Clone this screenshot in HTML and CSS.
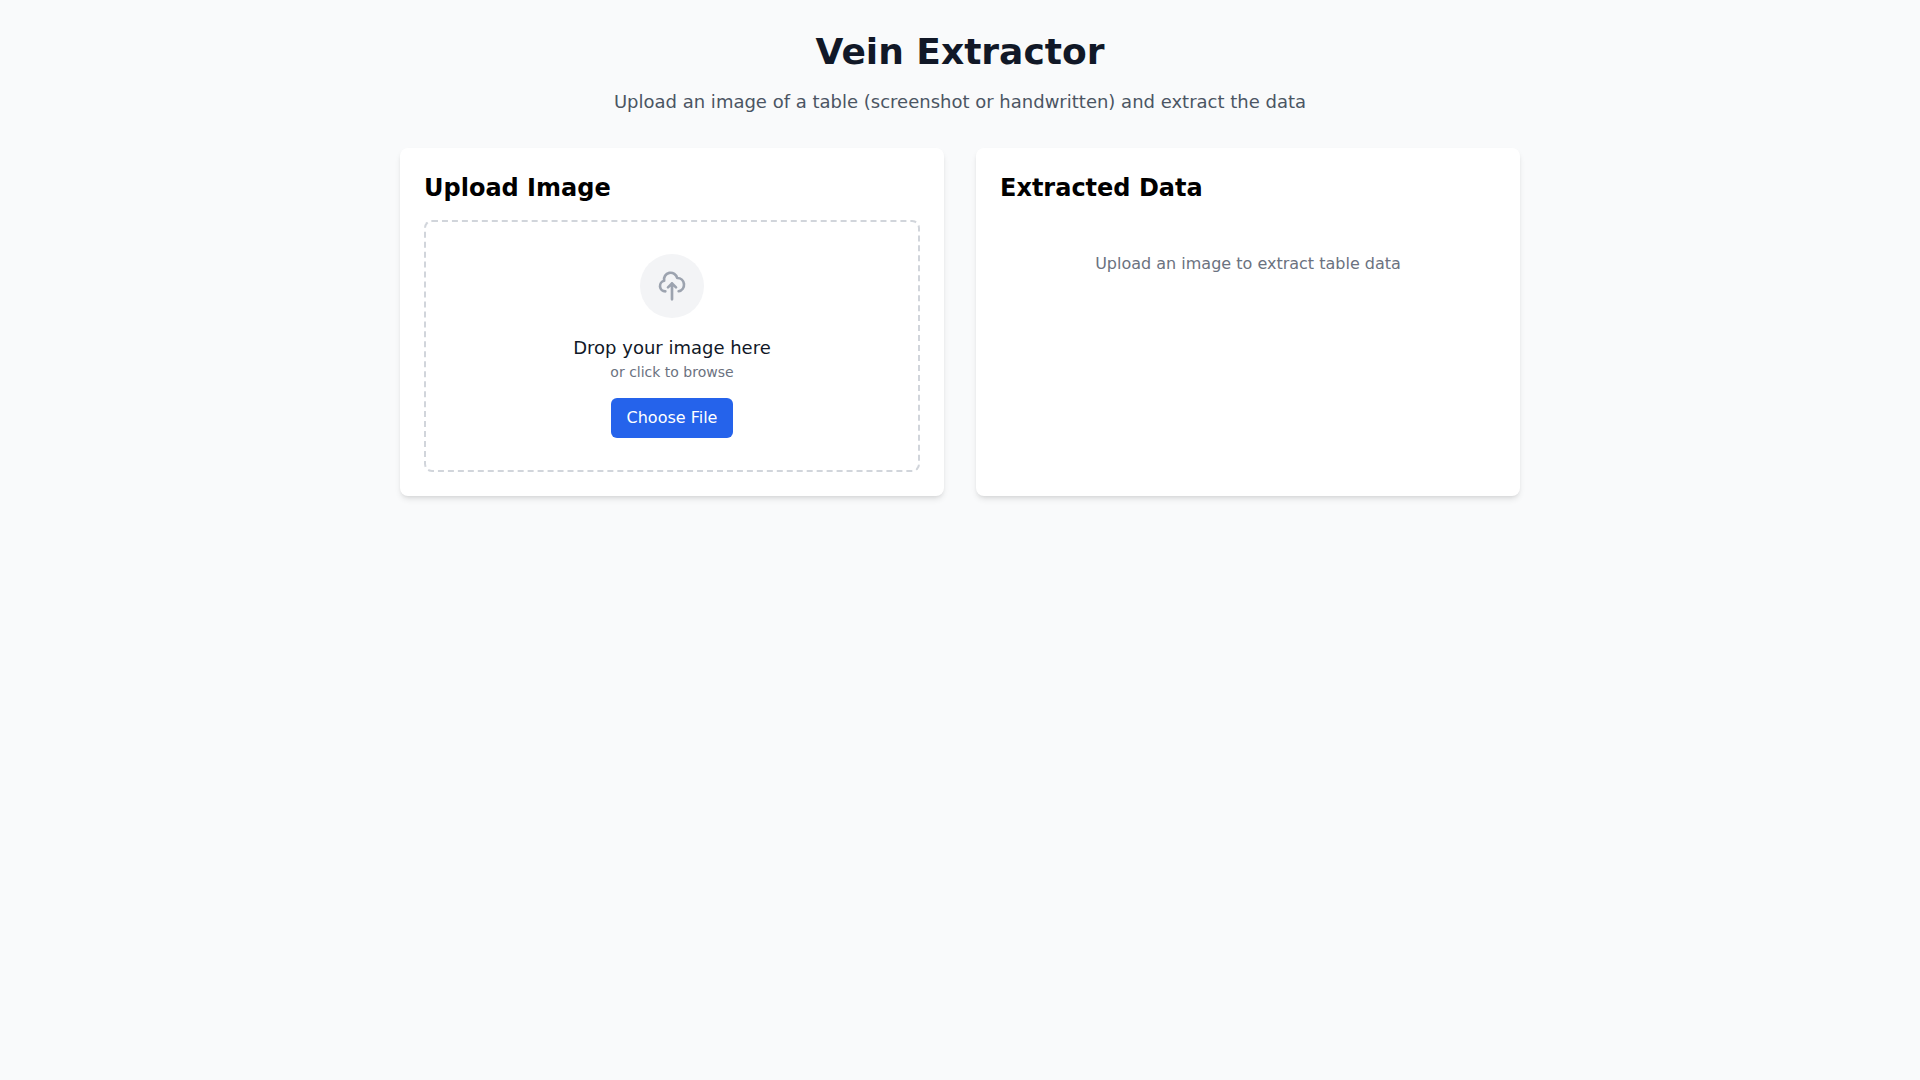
FILE: index.html
```html
<!DOCTYPE html>
<html lang="en">
<head>
  <meta charset="UTF-8" />
  <meta name="viewport" content="width=device-width, initial-scale=1" />
  <title>Vein Extractor</title>
  <link rel="stylesheet" href="styles.css">
</head>
<body>
  <div class="container">
    <header class="header">
      <h1>Vein Extractor</h1>
      <p>Upload an image of a table (screenshot or handwritten) and extract the data</p>
    </header>

    <main class="panels">
      <section class="card">
        <h2>Upload Image</h2>
        <div class="drop-zone" id="dropZone">
          <div class="upload-icon">
            <svg fill="none" stroke="currentColor" viewBox="0 0 24 24" aria-hidden="true">
              <path stroke-linecap="round" stroke-linejoin="round" stroke-width="2" d="M7 16a4 4 0 01-.88-7.903A5 5 0 1115.9 6L16 6a5 5 0 011 9.9M15 13l-3-3m0 0l-3 3m3-3v12"></path>
            </svg>
          </div>
          <div>
            <p class="drop-title">Drop your image here</p>
            <p class="drop-hint">or click to browse</p>
          </div>
          <input type="file" id="fileInput" accept="image/*" aria-label="Image file" hidden />
          <button type="button" class="button" id="chooseBtn">Choose File</button>
        </div>
      </section>

      <section class="card">
        <h2>Extracted Data</h2>
        <p class="empty-message">Upload an image to extract table data</p>
      </section>
    </main>
  </div>

  <script>
    const fileInput = document.getElementById('fileInput');

    // Open the file picker
    document.getElementById('chooseBtn').addEventListener('click', () => {
      fileInput.click();
    });
  </script>
</body>
</html>
```
FILE: styles.css
```css
* {
  box-sizing: border-box;
}
body {
  font-family: "DejaVu Sans", sans-serif;
  font-size: 16px;
  line-height: 24px;
  margin: 0;
  background-color: #f9fafb;
  color: #000;
}
h1, h2, p {
  margin: 0;
}

.container {
  max-width: 1152px;
  margin: 0 auto;
  padding: 32px 16px;
}
.header {
  text-align: center;
  margin-bottom: 32px;
}
.header h1 {
  font-size: 36px;
  line-height: 40px;
  color: #111827;
  margin-bottom: 16px;
}
.header p {
  font-size: 18px;
  line-height: 28px;
  color: #4b5563;
}

.panels {
  display: grid;
  grid-template-columns: 1fr 1fr;
  gap: 32px;
}
.card {
  background: white;
  border-radius: 8px;
  padding: 24px;
  box-shadow: 0 4px 6px -1px rgba(0, 0, 0, 0.1), 0 2px 4px -2px rgba(0, 0, 0, 0.1);
}
.card h2 {
  font-size: 24px;
  line-height: 32px;
  margin-bottom: 16px;
}

.drop-zone {
  display: flex;
  flex-direction: column;
  align-items: center;
  gap: 16px;
  padding: 32px;
  border: 2px dashed #d1d5db;
  border-radius: 8px;
  text-align: center;
}
.upload-icon {
  display: flex;
  justify-content: center;
  align-items: center;
  width: 64px;
  height: 64px;
  border-radius: 50%;
  background-color: #f3f4f6;
  color: #9ca3af;
}
.upload-icon svg {
  width: 32px;
  height: 32px;
}
.drop-title {
  font-size: 18px;
  line-height: 28px;
  color: #111827;
}
.drop-hint {
  font-size: 14px;
  line-height: 20px;
  color: #6b7280;
}
.button {
  background-color: #2563eb;
  color: white;
  font-family: inherit;
  font-size: 16px;
  line-height: 24px;
  padding: 8px 16px;
  border: none;
  border-radius: 6px;
  cursor: pointer;
}
.button:hover {
  background-color: #1d4ed8;
}
.empty-message {
  padding: 32px 0;
  text-align: center;
  color: #6b7280;
}

@media (max-width: 1023px) {
  .panels {
    grid-template-columns: 1fr;
  }
}
```
